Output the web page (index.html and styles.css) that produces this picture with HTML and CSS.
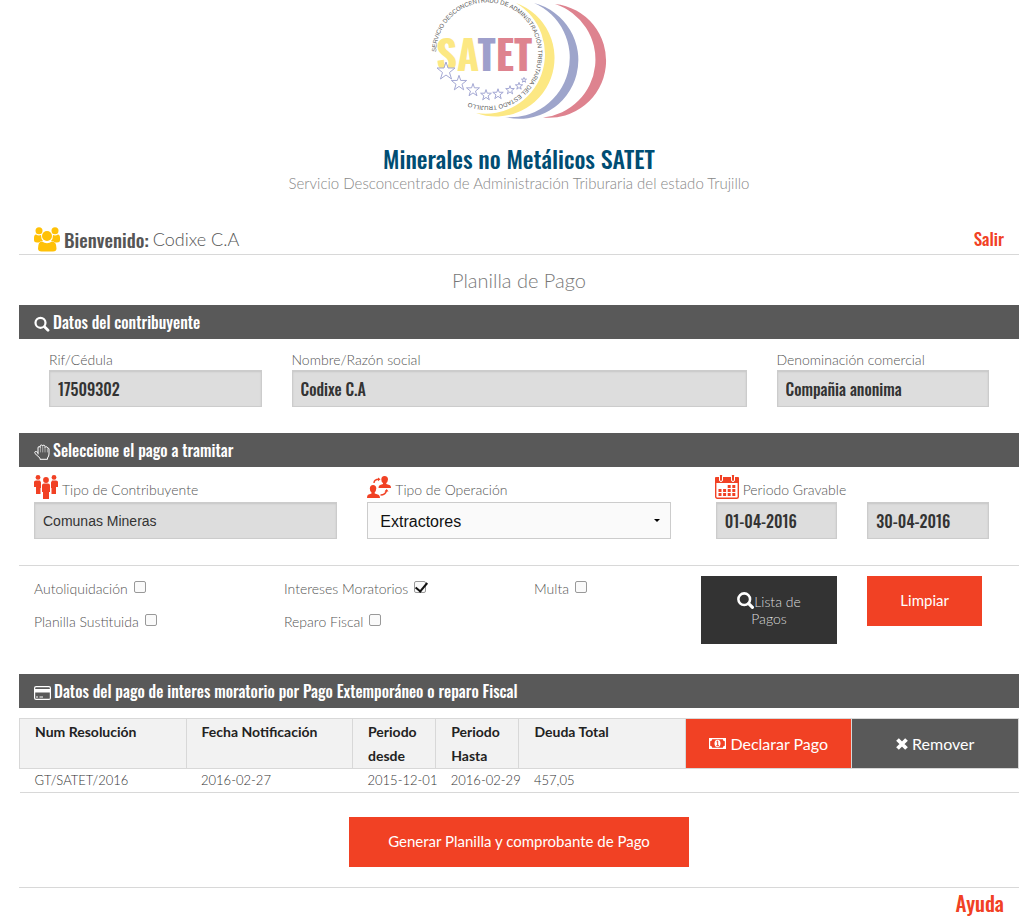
FILE: index.html
```html
<!DOCTYPE html>
<html lang="es">
<head>
<meta charset="utf-8">
<title>Minerales no Metálicos SATET</title>
<link rel="stylesheet" href="styles.css">
</head>
<body>
<div class="page">
  <header class="brand">
    <svg class="logo" viewBox="428 0 180 120" role="img" aria-label="SATET">
      <defs>
        <path id="ring" d="M435 52 A51 51 0 0 1 537 55 A51 51 0 0 1 435 55"/>
        <path id="star" d="M0 -9 L2 -3 L9 -3 L3.500 1.500 L5.500 8 L0 4 L-5.500 8 L-3.500 1.500 L-9 -3 L-2 -3 Z" vector-effect="non-scaling-stroke"/>
      </defs>
      <path fill="#fce883" d="M515 3 A58.500 58.500 0 1 1 475 113 A59.600 59.600 0 0 0 515 3Z"/>
      <path fill="#9ea5cb" d="M533 3 A58.800 58.800 0 1 1 504 117 A59.600 59.600 0 0 0 533 3Z"/>
      <path fill="#de838f" d="M554 4 A57 57 0 0 1 542 117.500 A58.300 58.300 0 0 0 554 4Z"/>
      <text class="logo-ring"><textPath href="#ring">SERVICIO DESCONCENTRADO DE ADMINISTRACIÓN TRIBUTARIA DEL ESTADO TRUJILLO</textPath></text>
      <text class="logo-name" x="435" y="71"><tspan fill="#fce883">SA</tspan><tspan fill="#9e9fcb">T</tspan><tspan fill="#de838f">ET</tspan></text>
      <g fill="#fff" stroke="#a3a7d3" stroke-width="1">
        <use href="#star" transform="translate(445 71)"/>
        <use href="#star" transform="translate(458 83) scale(.85)"/>
        <use href="#star" transform="translate(472 90) scale(.72)"/>
        <use href="#star" transform="translate(485 95) scale(.6)"/>
        <use href="#star" transform="translate(497 94) scale(.58)"/>
        <use href="#star" transform="translate(509 90) scale(.48)"/>
        <use href="#star" transform="translate(518 86) scale(.4)"/>
        <use href="#star" transform="translate(523 80) scale(.28)"/>
      </g>
    </svg>
    <h1 class="brand-title">Minerales no Metálicos SATET</h1>
    <p class="brand-subtitle">Servicio Desconcentrado de Administración Triburaria del estado Trujillo</p>
  </header>

  <div class="userbar">
    <p class="welcome">
      <svg class="icon-users" viewBox="0 0 26 25" aria-hidden="true" fill="#ffc107"><circle cx="5" cy="3.700" r="3.500"/><circle cx="21" cy="3.700" r="3.500"/><path d="M0 13 V11 Q0 7.500 2 7.500 Q4.500 9 7 8 Q7 12 9 14 Q6 14 5 15.500 H3 Q0 15.500 0 13ZM26 13 V11 Q26 7.500 24 7.500 Q21.500 9 19 8 Q19 12 17 14 Q20 14 21 15.500 H23 Q26 15.500 26 13Z"/><circle cx="13" cy="9" r="5"/><path d="M4 21.500 Q4 14.500 8 14.500 Q13 18 18 14.500 Q22.500 14.500 22.500 21.500 Q22.500 24.500 19 24.500 H7.500 Q4 24.500 4 21.500Z"/></svg>
      <strong class="welcome-label">Bienvenido:</strong>
      <span class="welcome-name">Codixe C.A</span>
    </p>
    <a class="logout" href="#salir">Salir</a>
  </div>

  <main>
    <h2 class="page-heading">Planilla de Pago</h2>

    <h3 class="bar"><svg class="icon-bar" viewBox="0 0 16 16" aria-hidden="true" fill="none" stroke="#fff"><circle cx="6.500" cy="6.800" r="5" stroke-width="2.200"/><path d="M10.500 10.800 L14 14.300" stroke-width="2.800" stroke-linecap="round"/></svg>Datos del contribuyente</h3>
    <section class="taxpayer">
      <div class="cell"><label class="label" for="rif">Rif/Cédula</label><input class="field" id="rif" value="17509302" readonly></div>
      <div class="cell"><label class="label" for="nombre">Nombre/Razón social</label><input class="field" id="nombre" value="Codixe C.A" readonly></div>
      <div class="cell"><label class="label" for="denom">Denominación comercial</label><input class="field" id="denom" value="Compañia anonima" readonly></div>
    </section>

    <h3 class="bar"><svg class="icon-bar" viewBox="0 0 16 16" aria-hidden="true" fill="none" stroke="#fff" stroke-linejoin="round" stroke-linecap="round"><path d="M4 10 V4 Q4 2.500 5.200 2.500 Q6.200 2.500 6.200 3.500 V2.200 Q6.200 1 7.400 1 Q8.600 1 8.600 2.200 Q8.600 1.200 9.800 1.200 Q11 1.200 11 2.500 V3.500 Q11.400 2.700 12.300 2.700 Q13.300 2.700 13.600 4 Q14.600 3.600 15 5 V10 Q15 12 13.500 14 V15.300 H6 V14.200 L1 9.500 Q.3 8.500 1.200 7.600 Q2.200 7 4 8.600"/><path d="M6.400 4 V8 M8.700 3 V8 M11 4 V8 M13.400 5 V8" stroke-width=".5"/></svg>Seleccione el pago a tramitar</h3>
    <section class="payment">
      <div class="cell">
        <label class="label" for="tipo"><svg class="icon-label" viewBox="0 0 24 24" aria-hidden="true" fill="#f14124"><circle cx="4" cy="2.400" r="2.400"/><circle cx="20" cy="2.400" r="2.400"/><path d="M0 7 Q0 5.500 2 5.500 H6 L7 7.500 V13 H6.500 V19 H2 V12 H0ZM24 7 Q24 5.500 22 5.500 H18 L17 7.500 V13 H17.500 V19 H22 V12 H24Z"/><circle cx="12" cy="5" r="2.900"/><path d="M8 10.500 Q8 8.500 10 8.500 H14 Q16 8.500 16 10.500 V17 H15 V24 H9 V17 H8Z"/></svg>Tipo de Contribuyente</label>
        <input class="field field-plain" id="tipo" value="Comunas Mineras" readonly>
      </div>
      <div class="cell">
        <label class="label" for="operacion"><svg class="icon-label" viewBox="0 0 24 24" aria-hidden="true" fill="#f14124"><path d="M17.500 1 Q21 1 21 4.500 Q20.700 7 19.300 8 V9 L23 10.200 Q24 11 24 13 H11.500 Q11.500 10.500 13 10 L16 9 V8 Q14.300 7 14.300 4.500 Q14.300 1 17.500 1ZM6 10 Q9.300 10 9.300 13.500 Q9 16.500 7.700 17.500 V18.500 L11.500 19.700 Q13 20.500 13 23 H0 Q0 20.500 1 19.700 L4.500 18.500 V17.500 Q2.800 16.500 2.800 13.500 Q3 10 6 10Z"/><path d="M7 8 Q7 4.500 12 4.300 M13.500 20 Q18.500 20 19.500 15.500" fill="none" stroke="#f14124" stroke-width="1.400"/><path d="M11 2.500 L13.500 4.300 L11 6.200Z M17.500 16.500 L19.700 14 L21.500 16.500Z"/></svg>Tipo de Operación</label>
        <select class="field select" id="operacion"><option>Extractores</option></select>
      </div>
      <div class="cell">
        <label class="label" for="desde"><svg class="icon-label icon-calendar" viewBox="0 0 24 24" aria-hidden="true"><rect x=".7" y="3" width="22.600" height="20.300" rx="1.500" fill="#fff" stroke="#f14124" stroke-width="1.400"/><path fill="#f14124" d="M0 3 Q0 2 1 2 H23 Q24 2 24 3 V8 H0Z"/><g fill="#f14124" stroke="#fff"><rect x="4.500" y="-1" width="3" height="7.500" rx="1.500"/><rect x="16.500" y="-1" width="3" height="7.500" rx="1.500"/></g><path d="M12.700 11.500 h8 M3.500 15.500 h17 M3.500 19.500 h17" stroke="#f14124" stroke-width="2.800" stroke-dasharray="3 1.600"/></svg>Periodo Gravable</label>
        <div class="dates">
          <input class="field" id="desde" value="01-04-2016" readonly>
          <input class="field" aria-label="Periodo hasta" value="30-04-2016" readonly>
        </div>
      </div>
    </section>

    <section class="options">
      <div class="checks">
        <label class="check">Autoliquidación <input class="tick" type="checkbox"></label>
        <label class="check">Planilla Sustituida <input class="tick" type="checkbox"></label>
      </div>
      <div class="checks">
        <label class="check">Intereses Moratorios <input class="tick" type="checkbox" checked></label>
        <label class="check">Reparo Fiscal <input class="tick" type="checkbox"></label>
      </div>
      <div class="checks">
        <label class="check">Multa <input class="tick" type="checkbox"></label>
      </div>
      <div class="cell"><button class="button button-dark" type="button"><svg class="icon-find" viewBox="0 0 16 16" aria-hidden="true" fill="none" stroke="#fff"><circle cx="6.800" cy="6.800" r="5.500" stroke-width="2.400"/><path d="M11 11 L14.500 14.500" stroke-width="3" stroke-linecap="round"/></svg>Lista de Pagos</button></div>
      <div class="cell"><button class="button" type="button">Limpiar</button></div>
    </section>

    <h3 class="bar"><svg class="icon-card" viewBox="0 0 17 14" aria-hidden="true"><rect x=".6" y=".6" width="15.800" height="12.800" rx="1.500" fill="none" stroke="#fff" stroke-width="1.200"/><path d="M0 3 H17 V6.500 H0Z" fill="#fff"/><path d="M2 11 h2 M5.500 11 h3.500" stroke="#fff"/></svg>Datos del pago de interes moratorio por Pago Extemporáneo o reparo Fiscal</h3>
    <table class="debts">
      <colgroup><col class="wide"><col class="wide"><col class="narrow"><col class="narrow"><col class="wide"><col class="wide"><col class="wide"></colgroup>
      <thead>
        <tr>
          <th>Num Resolución</th><th>Fecha Notificación</th><th>Periodo desde</th><th>Periodo Hasta</th><th>Deuda Total</th>
          <th class="action"><button class="action-button" type="button"><svg class="icon-money" viewBox="0 0 17 11" aria-hidden="true"><path fill="#fff" fill-rule="evenodd" d="M0 0 H17 V11 H0Z M3.200 1.200 Q3 3 1.200 3.200 V7.800 Q3 8 3.200 9.800 H13.800 Q14 8 15.800 7.800 V3.200 Q14 3 13.800 1.200Z"/><ellipse cx="8.500" cy="5.500" rx="3" ry="3.700" fill="#fff"/><path d="M7.500 3.800 L8.700 3 V7.500 M7.300 7.700 H10" fill="none" stroke="#f14124"/></svg>Declarar Pago</button></th>
          <th class="action"><button class="action-button action-grey" type="button"><svg class="icon-times" viewBox="0 0 12 12" aria-hidden="true"><path d="M1.500 1.500 L10.500 10.500 M10.500 1.500 L1.500 10.500" stroke="#fff" stroke-width="3.800"/></svg>Remover</button></th>
        </tr>
      </thead>
      <tbody>
        <tr><td>GT/SATET/2016</td><td>2016-02-27</td><td>2015-12-01</td><td>2016-02-29</td><td>457,05</td><td></td><td></td></tr>
      </tbody>
    </table>

    <div class="submit"><button class="button button-wide" type="button">Generar Planilla y comprobante de Pago</button></div>
  </main>

  <footer class="foot"><a class="help" href="#ayuda">Ayuda</a></footer>
</div>
</body>
</html>
```
FILE: styles.css
```css
* { box-sizing: border-box; }

:root {
  --red: #f14124;
  --grey: #595959;
  --line: #d8d8d8;
  --narrow: Oswald, "Roboto Condensed", "DejaVu Sans Condensed", sans-serif;
}

body {
  margin: 0;
  background: #fff;
  color: #555;
  font-family: Lato, sans-serif;
  font-size: 14px;
  font-weight: 300;
}

.page { padding: 0 13px 0 19px; }

h1, h2, h3, p { margin: 0; }

.brand {
  display: flex;
  flex-direction: column;
  align-items: center;
  text-align: center;
}
.logo { width: 180px; height: 120px; }
.logo-ring { font: 400 6px "Liberation Sans", sans-serif; fill: #555; }
.logo-name { font: 700 41px var(--narrow); }
.brand-title {
  margin-top: 22px;
  color: #004d73;
  font: 500 24px/32px var(--narrow);
}
.brand-subtitle { color: #888; font-size: 15px; line-height: 19px; }

.userbar {
  display: flex;
  align-items: center;
  justify-content: space-between;
  height: 31px;
  margin-top: 31px;
  padding: 0 15px;
  border-bottom: 1px solid var(--line);
}
.welcome { display: flex; align-items: center; gap: 4px; }
.icon-users { width: 26px; height: 25px; }
.welcome-label { color: #555; font: 500 19px/30px var(--narrow); }
.welcome-name { font-size: 18px; line-height: 30px; }
.logout { color: var(--red); font: 500 17px/30px var(--narrow); text-decoration: none; }

.page-heading {
  margin: 11px 0;
  color: #777;
  font-size: 20px;
  font-weight: 300;
  line-height: 28px;
  text-align: center;
}

.bar {
  display: flex;
  align-items: center;
  gap: 3px;
  height: 34px;
  padding: 0 15px;
  background: var(--grey);
  color: #fff;
  font: 500 16px/34px var(--narrow);
}
.icon-bar { width: 16px; height: 16px; margin-top: 3px; }
.icon-card { width: 17px; height: 14px; margin-top: 3px; }

.cell { padding: 0 15px; min-width: 0; }
.label {
  display: flex;
  align-items: flex-end;
  gap: 4px;
  line-height: 18px;
}
.icon-label { flex: none; width: 24px; height: 24px; }

.field {
  display: block;
  width: 100%;
  height: 37px;
  padding: 0 8px;
  border: 1px solid #ccc;
  border-radius: 0;
  background: #ddd;
  box-shadow: inset 0 1px 2px rgba(0, 0, 0, .1);
  color: #333;
  font: 500 16px var(--narrow);
}
.field-plain { font: 400 14px "Liberation Sans", sans-serif; }
.select {
  appearance: none;
  padding: 2px 12px 0;
  background: #fafafa url("data:image/svg+xml,%3Csvg xmlns='http://www.w3.org/2000/svg' width='6' height='3'%3E%3Cpath d='M0 0h6L3 3z'/%3E%3C/svg%3E") no-repeat right 10px center;
  box-shadow: none;
  color: #111;
  font: 400 16px "Liberation Sans", sans-serif;
}

.taxpayer {
  display: grid;
  grid-template-columns: 1fr 2fr 1fr;
  padding: 12px 15px 26px;
}
.taxpayer .label { padding-bottom: 1px; }

.payment {
  display: grid;
  grid-template-columns: repeat(3, 1fr);
  padding: 8px 0 26px;
}
.payment .label { align-items: flex-start; height: 27px; line-height: 30px; }
.icon-calendar { margin-left: 14px; }
.dates { display: grid; grid-template-columns: 1fr 1fr; gap: 30px; padding: 0 15px; }

.options {
  display: grid;
  grid-template-columns: 3fr 3fr 2fr 2fr 2fr;
  min-height: 109px;
  padding: 10px 0 30px;
  border-top: 1px solid var(--line);
}
.checks { display: flex; flex-direction: column; gap: 15px; padding: 3px 0 0 15px; }
.check { display: flex; align-items: center; gap: 6px; height: 18px; }
.tick {
  appearance: none;
  position: relative;
  width: 12px;
  height: 12px;
  margin: 0 0 3px;
  border: 1px solid #999;
  border-radius: 2px;
  background: #fafafa;
}
.tick:checked::after {
  content: "";
  position: absolute;
  left: 3px;
  top: -2px;
  width: 5px;
  height: 10px;
  border: solid #111;
  border-width: 0 2px 2px 0;
  transform: rotate(40deg);
}

.button {
  padding: 16px 33px 17px;
  border: 0;
  background: var(--red);
  color: #fff;
  font: 400 15px/17px Lato, sans-serif;
}
.button-dark { width: 100%; background: #333; color: #ddd; font-size: 14px; font-weight: 300; }
.button-wide { padding-right: 39px; padding-left: 39px; }
.icon-find { width: 17px; height: 17px; vertical-align: -2px; }

.debts {
  width: 100%;
  margin-top: 10px;
  border-collapse: collapse;
  border-bottom: 1px solid var(--line);
  table-layout: fixed;
}
.wide { width: 16.666%; }
.narrow { width: 8.333%; }
.debts th {
  padding: 1px 0 0 15px;
  border: 1px solid var(--line);
  background: #f2f2f2;
  color: #222;
  font-size: 14px;
  font-weight: 700;
  line-height: 24px;
  text-align: left;
  vertical-align: top;
}
.debts td {
  height: 24px;
  padding: 0 0 0 15px;
  color: #333;
  font-size: 13px;
  line-height: 23px;
  white-space: nowrap;
}
.debts .action { padding: 0; }
.action-button {
  display: flex;
  align-items: center;
  justify-content: center;
  gap: 4px;
  width: 100%;
  height: 49px;
  padding: 0;
  border: 0;
  background: var(--red);
  color: #fff;
  font: 400 16px Lato, sans-serif;
}
.action-grey { background: var(--grey); }
.icon-money { width: 17px; height: 11px; }
.icon-times { width: 12px; height: 12px; }

.submit { padding: 24px 0 20px; text-align: center; }

.foot { padding: 0 15px; border-top: 1px solid var(--line); text-align: right; }
.help { color: var(--red); font: 500 21px/30px var(--narrow); text-decoration: none; }
```
